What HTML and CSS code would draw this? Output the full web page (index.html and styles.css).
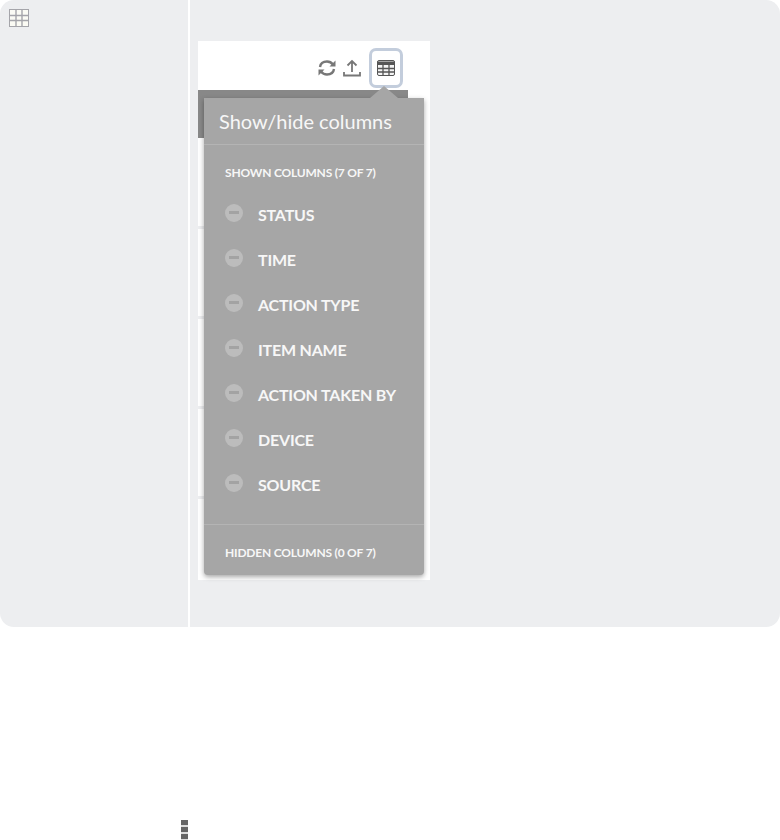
FILE: index.html
```html
<!DOCTYPE html>
<html lang="en">
  <head>
    <meta charset="UTF-8" />
    <title>Show/hide columns</title>
    <link rel="stylesheet" href="styles.css">
  </head>
  <body>
    <div class="panel">
      <div class="side">
        <svg class="side-icon" width="20" height="18" viewBox="0 0 20 18">
          <rect x="0.5" y="0.5" width="19" height="17" fill="#fbfbf4" stroke="#a5a5aa"/>
          <path d="M0 6.5H20M0 11.5H20M7 0V18M13 0V18" stroke="#a5a5aa" stroke-width="1.4" fill="none"/>
        </svg>
      </div>
      <div class="main">
        <div class="shot">
          <!-- Toolbar -->
          <div class="toolbar">
            <svg class="tool" width="20" height="20" viewBox="0 0 20 20" fill="none" stroke="#777" stroke-width="2.4">
              <path d="M3 9C3.5 5.5 6.500 3.500 10 3.500C12.500 3.500 14.500 4.500 16 6.500"/>
              <path d="M17 11C16.500 14.500 13.500 16.500 10 16.500C7.500 16.500 5.500 15.500 4 13.500"/>
              <path d="M18.500 2.500V8.500H12.500Z" fill="#777" stroke="none"/>
              <path d="M1.500 17.500V11.500H7.500Z" fill="#777" stroke="none"/>
            </svg>
            <svg class="tool" width="20" height="20" viewBox="0 0 20 20" fill="none" stroke="#777" stroke-width="1.800">
              <path d="M10 14V3M5.500 7.500L10 3L14.500 7.500"/>
              <path d="M2 14V17.500H18V14"/>
            </svg>
            <div class="tool-active">
              <svg width="18" height="16" viewBox="0 0 18 16">
                <rect x="0.500" y="0.500" width="17" height="15" rx="1.500" fill="#f4f4f4" stroke="#555"/>
                <path d="M0 1.500H18V5H0Z" fill="#555"/>
                <path d="M0 8.500H18M0 12H18M6 4V16M12 4V16" stroke="#555" stroke-width="1.300" fill="none"/>
              </svg>
            </div>
          </div>

          <div class="band"></div>
          <div class="ticks">
            <span class="tick"></span>
            <span class="tick"></span>
            <span class="tick"></span>
            <span class="tick"></span>
          </div>

          <!-- Popover -->
          <div class="popover">
            <span class="arrow"></span>
            <div class="pop-title">Show/hide columns</div>
            <div class="pop-section">
              <div class="pop-label">SHOWN COLUMNS (7 OF 7)</div>
              <ul class="col-list">
                <li class="col-item"><span class="minus"></span>STATUS</li>
                <li class="col-item"><span class="minus"></span>TIME</li>
                <li class="col-item"><span class="minus"></span>ACTION TYPE</li>
                <li class="col-item"><span class="minus"></span>ITEM NAME</li>
                <li class="col-item"><span class="minus"></span>ACTION TAKEN BY</li>
                <li class="col-item"><span class="minus"></span>DEVICE</li>
                <li class="col-item"><span class="minus"></span>SOURCE</li>
              </ul>
            </div>
            <div class="pop-section pop-hidden">
              <div class="pop-label">HIDDEN COLUMNS (0 OF 7)</div>
            </div>
          </div>
        </div>
      </div>
    </div>
    <div class="footer">
      <span class="kebab"></span>
    </div>
  </body>
</html>
```

FILE: styles.css
```css
* {
  margin: 0;
  padding: 0;
  box-sizing: border-box;
}

html,
body {
  height: 840px;
  overflow: hidden;
}

body {
  font-family: "Lato", sans-serif;
  background-color: #fff;
}

.panel {
  display: flex;
  height: 627px;
  background-color: #edeef0;
  border-radius: 14px;
}

.side {
  width: 190px;
  padding: 9px;
  border-right: 2px solid #fff;
}

.side-icon {
  display: block;
}

.main {
  flex: 1;
  padding: 41px 0 0 8px;
}

.shot {
  position: relative;
  width: 232px;
  height: 539px;
  background-color: #fff;
}

.toolbar {
  display: flex;
  justify-content: flex-end;
  align-items: center;
  gap: 5px;
  height: 49px;
  padding: 5px 28px 0 0;
}

.tool {
  display: block;
}

.tool-active {
  display: flex;
  justify-content: center;
  align-items: center;
  width: 34px;
  height: 40px;
  margin-left: 2px;
  margin-right: -1px;
  border: 3px solid #c3cddc;
  border-radius: 7px;
}

.band {
  width: 210px;
  height: 48px;
  background-color: #888;
}

.ticks {
  display: flex;
  flex-direction: column;
  gap: 87px;
  padding-top: 88px;
}

.tick {
  width: 6px;
  height: 3px;
  background-color: #edeef0;
}

.popover {
  position: absolute;
  top: 57px;
  left: 6px;
  width: 220px;
  height: 477px;
  color: #f7f7f7;
  background-color: #a6a6a6;
  border-radius: 0 0 4px 4px;
  box-shadow: 0 2px 5px rgba(0, 0, 0, 0.35);
}

.arrow {
  position: absolute;
  top: -12px;
  left: 166px;
  width: 0;
  height: 0;
  border-left: 14px solid transparent;
  border-right: 14px solid transparent;
  border-bottom: 12px solid #a6a6a6;
}

.pop-title {
  height: 47px;
  padding: 11px 15px 0;
  font-size: 20px;
  line-height: 24px;
  border-bottom: 1px solid #b4b4b4;
}

.pop-section {
  padding: 20px 21px 0;
}

.pop-label {
  font-size: 12px;
  font-weight: 700;
  line-height: 16px;
  letter-spacing: -0.2px;
  white-space: nowrap;
}

.col-list {
  list-style: none;
  padding-top: 11px;
  height: 343px;
}

.col-item {
  display: flex;
  align-items: center;
  height: 45px;
  font-size: 16px;
  font-weight: 700;
  letter-spacing: -0.2px;
  white-space: nowrap;
}

.minus {
  position: relative;
  flex: none;
  width: 18px;
  height: 18px;
  margin: -4px 15px 0 0;
  background-color: #bcbcbc;
  border-radius: 50%;
}

.minus::after {
  content: "";
  position: absolute;
  top: 7px;
  left: 4px;
  width: 10px;
  height: 3px;
  background-color: #a3a3a3;
}

.pop-hidden {
  border-top: 1px solid #b4b4b4;
}

.footer {
  padding: 193px 0 0 181px;
}

.kebab {
  display: block;
  width: 7px;
  height: 20px;
  background: repeating-linear-gradient(#666 0, #666 5px, #ddd 5px, #ddd 7px);
}
```
